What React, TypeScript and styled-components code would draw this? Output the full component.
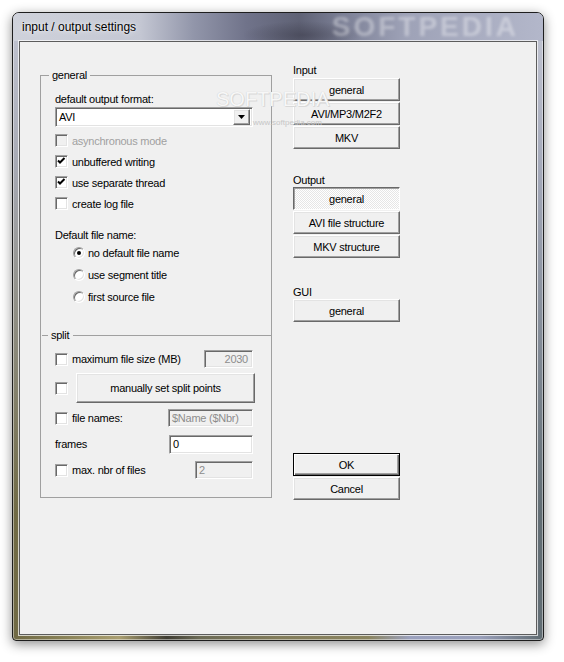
import React from "react";
import styled, { createGlobalStyle, css } from "styled-components";

const GlobalStyle = createGlobalStyle`
  html, body { margin: 0; padding: 0; background: #fff; }
  body { font-family: "Liberation Sans", Arial, sans-serif; }
`;

const Page = styled.div`
  width: 564px;
  height: 662px;
  padding: 12px 0 0 12px;
  box-sizing: border-box;
`;

const Window = styled.div`
  position: relative;
  width: 532px;
  height: 629px;
  box-sizing: border-box;
  border: 1px solid #1e1e1e;
  border-radius: 7px 7px 4px 4px;
  padding: 0 6px 5px;
  display: flex;
  flex-direction: column;
  overflow: hidden;
  background:
    linear-gradient(180deg, #c3c6d3 0%, rgba(176, 180, 198, 0.85) 25%, rgba(150, 150, 160, 0) 80%),
    linear-gradient(90deg, #6f6944 0%, #8a8358 10%, #aa9f71 20%, #3f3d33 29%, #6b6a55 35%, #837d5b 50%, #8a845f 67%, #9ba1be 75%, #9aa0bb 88%, #5f6b71 100%);
  box-shadow: 0 3px 12px rgba(0, 0, 0, 0.45), inset 0 0 0 1px rgba(255, 255, 255, 0.45);
`;

const TitleBar = styled.div`
  position: relative;
  height: 28px;
  margin: 0 -6px;
  padding-left: 9px;
  display: flex;
  align-items: center;
  font-size: 12px;
  color: #000;
  background:
    radial-gradient(ellipse 60px 14px at 290px 22px, rgba(60, 60, 75, 0.55), transparent),
    linear-gradient(90deg, #cfd2db 0%, #c4c7d3 24%, #9296aa 34%, #70738a 44%, #5f6275 54%, #7b7f95 62%, #9ea2b7 74%, #b3b7ca 100%);
`;

const TitleText = styled.span`
  position: relative;
  z-index: 1;
  text-shadow: 0 0 6px rgba(255, 255, 255, 0.9), 0 0 2px rgba(255, 255, 255, 0.7);
`;

const TitleMark = styled.span`
  position: absolute;
  right: 24px;
  top: 2px;
  font-size: 28px;
  line-height: 24px;
  font-weight: bold;
  letter-spacing: 3px;
  color: rgba(255, 255, 255, 0.36);
  filter: blur(1.4px);
`;

const Client = styled.div`
  position: relative;
  flex: 1;
  display: flex;
  align-items: flex-start;
  background: #f0f0f0;
  border: 1px solid #5c5c5c;
  box-shadow: 0 0 0 1px rgba(255, 255, 255, 0.7);
  font-size: 11px;
  letter-spacing: -0.25px;
  color: #000;
`;

const Frame = styled.div`
  width: 232px;
  height: 423px;
  box-sizing: border-box;
  margin: 33px 0 0 20px;
  border: 1px solid #a0a0a0;
  display: flex;
  flex-direction: column;
`;

const Caption = styled.div`
  height: 13px;
  margin-top: -7px;
  padding-left: 8px;
  display: flex;
  align-items: center;
  span { background: #f0f0f0; padding: 0 3px; line-height: 13px; }
`;

const Divider = styled.div<{ $mt: number }>`
  height: 13px;
  margin-top: ${(p) => p.$mt}px;
  display: flex;
  align-items: center;
  &::before { content: ""; width: 6px; height: 1px; margin-left: 1px; background: #a0a0a0; }
  &::after { content: ""; flex: 1; height: 1px; background: #a0a0a0; }
  span { padding: 0 4px 0 3px; line-height: 13px; }
`;

const Body = styled.div<{ $gap?: number; $mt?: number }>`
  display: flex;
  flex-direction: column;
  gap: ${(p) => p.$gap ?? 0}px;
  margin-top: ${(p) => p.$mt ?? 0}px;
  padding: 0 18px 0 14px;
`;

const FieldLabel = styled.div<{ $mt: number }>`
  height: 14px;
  line-height: 14px;
  margin-top: ${(p) => p.$mt}px;
`;

const Row = styled.div<{ $h: number; $mt?: number; $indent?: number; $disabled?: boolean }>`
  height: ${(p) => p.$h}px;
  margin-top: ${(p) => p.$mt ?? 0}px;
  padding-left: ${(p) => p.$indent ?? 0}px;
  display: flex;
  align-items: center;
  color: ${(p) => (p.$disabled ? "#a0a0a0" : "#000")};
  white-space: nowrap;
`;

const sunken = css`
  box-sizing: border-box;
  border: 1px solid;
  border-color: #a0a0a0 #fff #fff #a0a0a0;
  box-shadow: inset 1px 1px 0 #696969, inset -1px -1px 0 #e3e3e3;
`;

const raised = css`
  box-sizing: border-box;
  border: 1px solid;
  border-color: #fff #696969 #696969 #fff;
  box-shadow: inset -1px -1px 0 #a0a0a0, inset 1px 1px 0 #e3e3e3;
  background: #f0f0f0;
`;

const Box = styled.span<{ $disabled?: boolean }>`
  ${sunken};
  width: 13px;
  height: 13px;
  flex: none;
  display: flex;
  align-items: center;
  justify-content: center;
  background: ${(p) => (p.$disabled ? "#f0f0f0" : "#fff")};
  margin-right: 4px;
`;

const Round = styled.span`
  ${sunken};
  width: 12px;
  height: 12px;
  flex: none;
  border-radius: 50%;
  background: #fff;
  display: flex;
  align-items: center;
  justify-content: center;
  margin-right: 3px;
  &[data-on="true"]::after {
    content: "";
    width: 4px;
    height: 4px;
    border-radius: 50%;
    background: #000;
  }
`;

const Combo = styled.div`
  ${sunken};
  width: 198px;
  height: 20px;
  margin-top: 1px;
  background: #fff;
  display: flex;
  align-items: center;
  padding: 0 2px 0 3px;
  span { flex: 1; }
`;

const ArrowBtn = styled.div`
  ${raised};
  width: 17px;
  height: 16px;
  display: flex;
  align-items: center;
  justify-content: center;
`;

const Field = styled.div<{ $w: number; $h?: number; $disabled?: boolean; $right?: boolean }>`
  ${sunken};
  width: ${(p) => p.$w}px;
  height: ${(p) => p.$h ?? 18}px;
  margin-left: auto;
  padding: 0 4px 0 3px;
  display: flex;
  align-items: center;
  justify-content: ${(p) => (p.$right ? "flex-end" : "flex-start")};
  background: ${(p) => (p.$disabled ? "#f0f0f0" : "#fff")};
  color: ${(p) => (p.$disabled ? "#8d8d8d" : "#000")};
`;

const Button = styled.button<{ $pressed?: boolean; $default?: boolean; $w?: number; $h?: number }>`
  ${raised};
  width: ${(p) => p.$w ?? 107}px;
  height: ${(p) => p.$h ?? 23}px;
  padding: 0;
  margin: 0;
  flex: none;
  font-family: "Liberation Sans", Arial, sans-serif;
  font-size: 11px;
  letter-spacing: -0.25px;
  color: #000;
  ${(p) =>
    p.$pressed &&
    css`
      border-color: #696969 #fff #fff #696969;
      box-shadow: inset 1px 1px 0 #a0a0a0;
      background: repeating-conic-gradient(#fff 0 25%, #e6e6e6 0 50%) 0 0 / 2px 2px;
    `}
  ${(p) =>
    p.$default &&
    css`
      border: 1px solid #000;
      box-shadow: inset 1px 1px 0 #fff, inset -1px -1px 0 #696969, inset -2px -2px 0 #a0a0a0;
    `}
`;

const SplitButton = styled(Button)`
  margin-left: 4px;
`;

const Side = styled.div`
  width: 107px;
  margin: 21px 0 0 21px;
  display: flex;
  flex-direction: column;
`;

const SideLabel = styled.div<{ $mt?: number; $mb?: number }>`
  height: 14px;
  line-height: 14px;
  margin-top: ${(p) => p.$mt ?? 0}px;
  margin-bottom: ${(p) => p.$mb ?? 0}px;
`;

const Stack = styled.div<{ $mt?: number }>`
  display: flex;
  flex-direction: column;
  gap: 1px;
  margin-top: ${(p) => p.$mt ?? 0}px;
`;

const Watermark = styled.div`
  position: absolute;
  left: 196px;
  top: 50px;
  pointer-events: none;
  letter-spacing: 0;
  b {
    display: block;
    font-weight: normal;
    font-size: 20px;
    line-height: 14px;
    color: #f7f7f7;
    text-shadow: 0 0 1px #c4c4c4, 1px 1px 0 #dcdcdc;
  }
  i {
    display: block;
    font-style: normal;
    font-size: 8px;
    line-height: 8px;
    margin: 13px 0 0 37px;
    color: #c6c6c6;
  }
`;

const Check = ({ on, disabled }: { on?: boolean; disabled?: boolean }) => (
  <Box $disabled={disabled}>
    {on && (
      <svg width="9" height="9" viewBox="0 0 9 9">
        <polyline points="1,3.5 3,5.5 7.5,1" fill="none" stroke="#000" strokeWidth="2" />
      </svg>
    )}
  </Box>
);

const Radio = ({ on }: { on?: boolean }) => <Round data-on={on ? "true" : "false"} />;

export default function App() {
  return (
    <Page>
      <GlobalStyle />
      <Window>
        <TitleBar>
          <TitleText>input / output settings</TitleText>
          <TitleMark>SOFTPEDIA</TitleMark>
        </TitleBar>
        <Client>
          <Frame>
            <Caption>
              <span>general</span>
            </Caption>
            <Body>
              <FieldLabel $mt={10}>default output format:</FieldLabel>
              <Combo>
                <span>AVI</span>
                <ArrowBtn>
                  <svg width="7" height="4" viewBox="0 0 7 4">
                    <polygon points="0,0 7,0 3.5,4" fill="#000" />
                  </svg>
                </ArrowBtn>
              </Combo>
              <Row $h={21} $mt={3} $disabled>
                <Check disabled />
                asynchronous mode
              </Row>
              <Row $h={21}>
                <Check on />
                unbuffered writing
              </Row>
              <Row $h={21}>
                <Check on />
                use separate thread
              </Row>
              <Row $h={21}>
                <Check />
                create log file
              </Row>
              <FieldLabel $mt={14}>Default file name:</FieldLabel>
              <Row $h={22} $indent={18}>
                <Radio on />
                no default file name
              </Row>
              <Row $h={22} $indent={18}>
                <Radio />
                use segment title
              </Row>
              <Row $h={22} $indent={18}>
                <Radio />
                first source file
              </Row>
            </Body>
            <Divider $mt={21}>
              <span>split</span>
            </Divider>
            <Body $gap={4} $mt={7}>
              <Row $h={20}>
                <Check />
                maximum file size (MB)
                <Field $w={49} $disabled $right>
                  2030
                </Field>
              </Row>
              <Row $h={30}>
                <Check />
                <SplitButton $w={179} $h={30}>
                  manually set split points
                </SplitButton>
              </Row>
              <Row $h={22}>
                <Check />
                file names:
                <Field $w={85} $disabled>
                  $Name ($Nbr)
                </Field>
              </Row>
              <Row $h={22}>
                frames
                <Field $w={84} $h={19}>
                  0
                </Field>
              </Row>
              <Row $h={22}>
                <Check />
                max. nbr of files
                <Field $w={58} $disabled>
                  2
                </Field>
              </Row>
            </Body>
          </Frame>
          <Side>
            <SideLabel $mb={1}>Input</SideLabel>
            <Stack>
              <Button>general</Button>
              <Button>AVI/MP3/M2F2</Button>
              <Button>MKV</Button>
            </Stack>
            <SideLabel $mt={24}>Output</SideLabel>
            <Stack>
              <Button $pressed>general</Button>
              <Button>AVI file structure</Button>
              <Button>MKV structure</Button>
            </Stack>
            <SideLabel $mt={27}>GUI</SideLabel>
            <Stack>
              <Button>general</Button>
            </Stack>
            <Stack $mt={131}>
              <Button $default>OK</Button>
              <Button>Cancel</Button>
            </Stack>
          </Side>
          <Watermark>
            <b>SOFTPEDIA</b>
            <i>www.softpedia.com</i>
          </Watermark>
        </Client>
      </Window>
    </Page>
  );
}
